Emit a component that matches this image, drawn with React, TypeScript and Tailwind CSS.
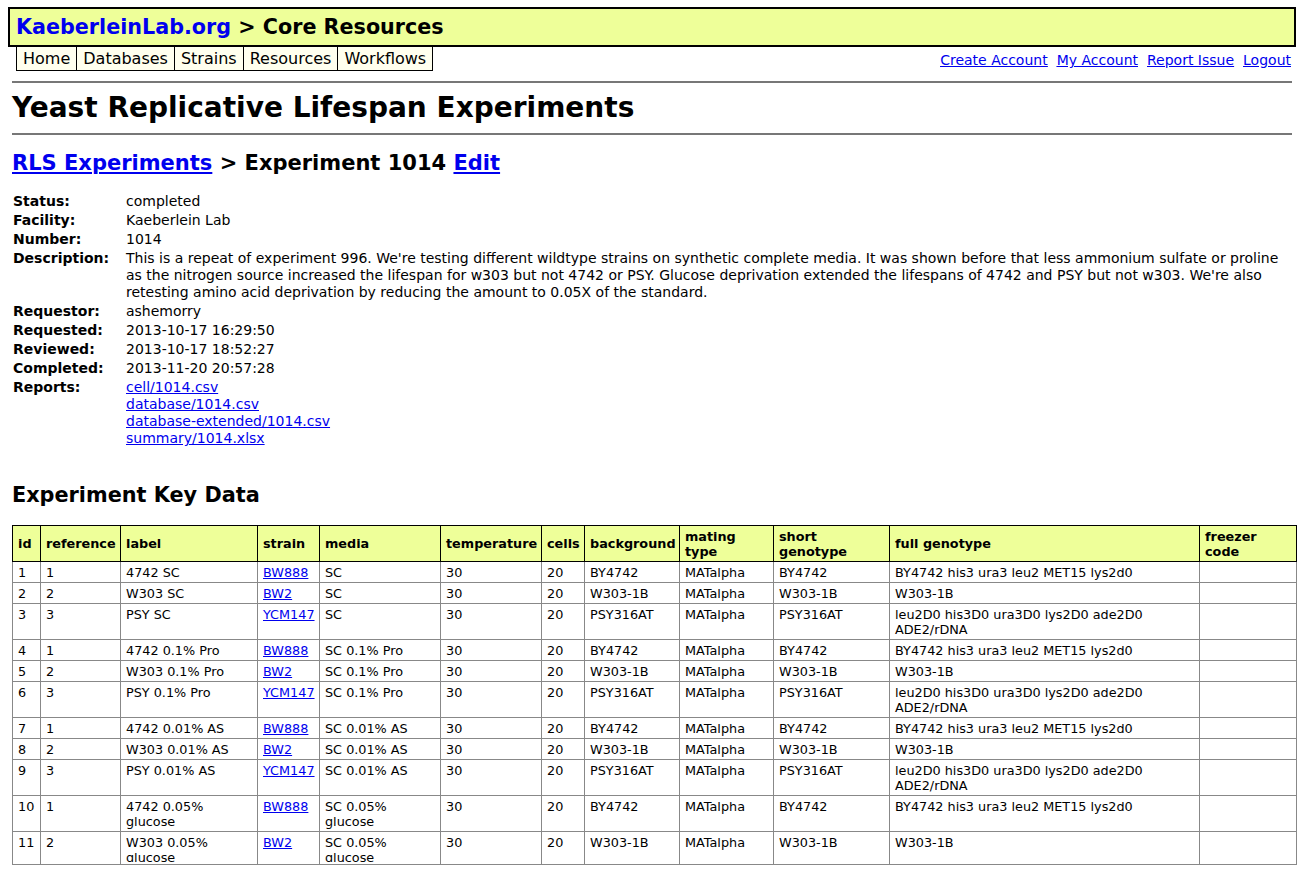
import React from "react";

const details: [string, string][] = [
  ["Status:", "completed"],
  ["Facility:", "Kaeberlein Lab"],
  ["Number:", "1014"],
  [
    "Description:",
    "This is a repeat of experiment 996. We're testing different wildtype strains on synthetic complete media. It was shown before that less ammonium sulfate or proline as the nitrogen source increased the lifespan for w303 but not 4742 or PSY. Glucose deprivation extended the lifespans of 4742 and PSY but not w303. We're also retesting amino acid deprivation by reducing the amount to 0.05X of the standard.",
  ],
  ["Requestor:", "ashemorry"],
  ["Requested:", "2013-10-17 16:29:50"],
  ["Reviewed:", "2013-10-17 18:52:27"],
  ["Completed:", "2013-11-20 20:57:28"],
];

const reports = ["cell/1014.csv", "database/1014.csv", "database-extended/1014.csv", "summary/1014.xlsx"];

const columns: { title: React.ReactNode; w: string }[] = [
  { title: "id", w: "w-[28px]" },
  { title: "reference", w: "w-[80px]" },
  { title: "label", w: "w-[137px]" },
  { title: "strain", w: "w-[62px]" },
  { title: "media", w: "w-[121px]" },
  { title: "temperature", w: "w-[101px]" },
  { title: "cells", w: "w-[43px]" },
  { title: "background", w: "w-[95px]" },
  { title: <>mating<br />type</>, w: "w-[94px]" },
  { title: <>short<br />genotype</>, w: "w-[116px]" },
  { title: "full genotype", w: "w-[310px]" },
  { title: <>freezer<br />code</>, w: "w-[97px]" },
];

type Row = { id: number; ref: number; label: string; strain: string; media: string; bg: string; short: string; full: string };

const strainFor: Record<number, { strain: string; bg: string; full: string; name: string }> = {
  1: { strain: "BW888", bg: "BY4742", full: "BY4742 his3 ura3 leu2 MET15 lys2d0", name: "4742" },
  2: { strain: "BW2", bg: "W303-1B", full: "W303-1B", name: "W303" },
  3: { strain: "YCM147", bg: "PSY316AT", full: "leu2D0 his3D0 ura3D0 lys2D0 ade2D0 ADE2/rDNA", name: "PSY" },
};

const medias = ["SC", "SC 0.1% Pro", "SC 0.01% AS", "SC 0.05% glucose"];

const rows: Row[] = [];
for (let i = 0; i < 11; i++) {
  const ref = (i % 3) + 1;
  const s = strainFor[ref];
  const media = medias[Math.floor(i / 3)];
  rows.push({
    id: i + 1,
    ref,
    label: `${s.name} ${media.replace("SC ", "")}`,
    strain: s.strain,
    media,
    bg: s.bg,
    short: s.bg,
    full: s.full,
  });
}

export default function App() {
  return (
    <div className="w-[1304px] h-[880px] overflow-hidden bg-white text-black font-['DejaVu_Sans',Verdana,sans-serif] text-[14px] leading-[17px]">
      {/* Banner */}
      <div className="mx-[8px] mt-[7px] h-[40px] border-2 border-black bg-[#eeff99] pl-[6px] flex items-center">
        <span className="text-[20.7px] font-bold">
          <a className="text-[#0000ee]">KaeberleinLab.org</a> &gt; Core Resources
        </span>
      </div>

      {/* Nav */}
      <div className="flex justify-between pl-[16px] pr-[13px]">
        <div className="flex h-[24px] border border-t-0 border-black text-[16px]">
          {["Home", "Databases", "Strains", "Resources", "Workflows"].map((t, i) => (
            <div
              key={t}
              className={`bg-[#ffffee] px-[6px] flex items-center ${i > 0 ? "border-l border-black" : ""}`}
            >
              {t}
            </div>
          ))}
        </div>
        <div className="flex gap-[9px] pt-[5px] text-[#0000ee] underline">
          <a>Create Account</a>
          <a>My Account</a>
          <a>Report Issue</a>
          <a>Logout</a>
        </div>
      </div>

      <div className="px-[12px]">
        <div className="mt-[10px] h-[2px] bg-[#777]" />
        <h1 className="text-[28px] font-bold leading-[34px] py-[8px]">Yeast Replicative Lifespan Experiments</h1>
        <div className="h-[2px] bg-[#777]" />

        <h2 className="mt-[14px] text-[21px] font-bold leading-[28px]">
          <a className="text-[#0000ee] underline">RLS Experiments</a> &gt; Experiment 1014{" "}
          <a className="text-[#0000ee] underline">Edit</a>
        </h2>

        {/* Details */}
        <div className="mt-[16px] grid grid-cols-[113px_1fr] gap-y-[2px] pl-[1px]">
          {details.map(([k, v]) => (
            <React.Fragment key={k}>
              <div className="font-bold">{k}</div>
              <div>{v}</div>
            </React.Fragment>
          ))}
          <div className="font-bold">Reports:</div>
          <div className="flex flex-col">
            {reports.map((r) => (
              <a key={r} className="text-[#0000ee] underline">
                {r}
              </a>
            ))}
          </div>
        </div>

        <h3 className="mt-[36px] text-[20.8px] font-bold leading-[24px]">Experiment Key Data</h3>

        {/* Table */}
        <table className="mt-[18px] w-[1284px] table-fixed border-collapse text-[12.8px] leading-[15px]">
          <thead>
            <tr className="bg-[#eeff99]">
              {columns.map((c, i) => (
                <th
                  key={i}
                  className={`${c.w} h-[36px] border border-black text-left align-middle font-bold pl-[5px] pr-[3px]`}
                >
                  {c.title}
                </th>
              ))}
            </tr>
          </thead>
          <tbody>
            {rows.map((r, ri) => {
              const last = ri === rows.length - 1;
              return (
                <tr key={r.id}>
                  {[
                    r.id,
                    r.ref,
                    r.label,
                    <a className="text-[#0000ee] underline">{r.strain}</a>,
                    r.media,
                    30,
                    20,
                    r.bg,
                    "MATalpha",
                    r.short,
                    r.full,
                    "",
                  ].map((v, i) => (
                    <td
                      key={i}
                      className="border border-[#888] align-top pl-[5px] pr-[3px] pt-[3px] pb-[2px]"
                    >
                      {last ? <div className="h-[27px] overflow-hidden">{v}</div> : v}
                    </td>
                  ))}
                </tr>
              );
            })}
          </tbody>
        </table>
      </div>
    </div>
  );
}
